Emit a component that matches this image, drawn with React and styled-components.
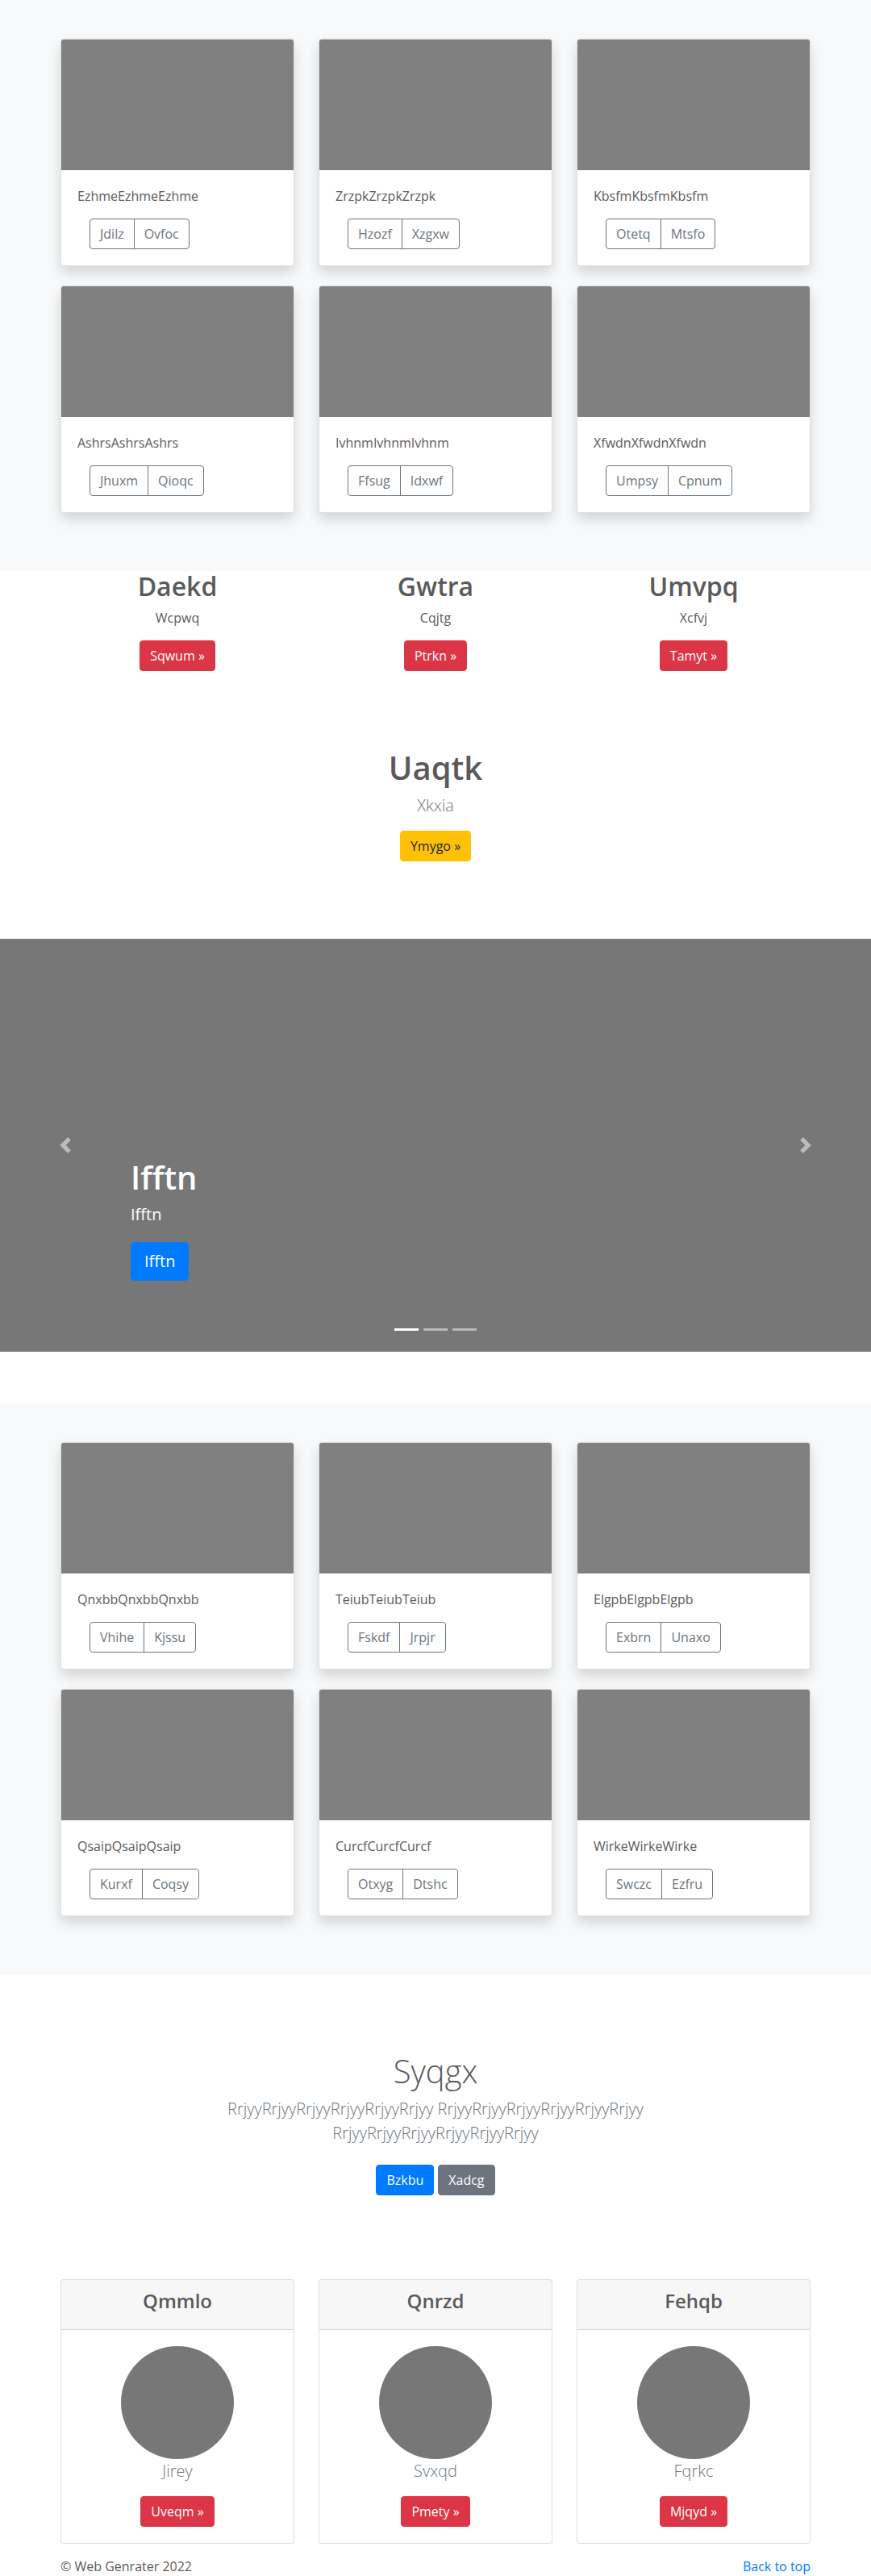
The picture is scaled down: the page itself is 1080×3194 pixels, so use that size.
import React from "react";
import styled, { createGlobalStyle, css } from "styled-components";

const GlobalStyle = createGlobalStyle`
  *, *::before, *::after { box-sizing: border-box; }
  html, body { margin: 0; padding: 0; }
  body {
    font-family: "Open Sans", "Noto Sans", "Liberation Sans", sans-serif;
    font-size: 16px;
    line-height: 1.5;
    color: #5a5a5a;
    background: #fff;
  }
`;

const Container = styled.div`
  width: 100%;
  max-width: ${(p) => p.$max || 960}px;
  margin: 0 auto;
  padding: 0 15px;
`;

/* ---------- Album ---------- */
const AlbumSection = styled.section`
  background: #f8f9fa;
  padding: 48px 0;
`;

const CardGrid = styled.div`
  display: grid;
  grid-template-columns: repeat(3, 1fr);
  column-gap: 30px;
`;

const AlbumCard = styled.div`
  display: flex;
  flex-direction: column;
  background: #fff;
  border: 1px solid rgba(0, 0, 0, 0.125);
  border-radius: 4px;
  margin-bottom: 24px;
  box-shadow: 0 8px 16px rgba(0, 0, 0, 0.15);
  overflow: hidden;
`;

const CardImage = styled.div`
  width: 100%;
  aspect-ratio: 16 / 9;
  background: #808080;
`;

const CardBody = styled.div`
  padding: 20px;
`;

const CardText = styled.p`
  margin: 0 0 16px;
`;

const ButtonGroup = styled.div`
  display: inline-flex;
  margin-left: 15px;
`;

const OutlineButton = styled.button`
  font: inherit;
  font-size: 16px;
  line-height: 24px;
  padding: 6px 12px;
  color: #6c757d;
  background: transparent;
  border: 1px solid #6c757d;
  border-radius: 0;
  cursor: pointer;
  &:first-child { border-radius: 4px 0 0 4px; }
  &:last-child { border-radius: 0 4px 4px 0; margin-left: -1px; }
`;

/* ---------- Buttons ---------- */
const variants = {
  danger: css`background: #dc3545; border-color: #dc3545; color: #fff;`,
  warning: css`background: #ffc107; border-color: #ffc107; color: #212529;`,
  primary: css`background: #007bff; border-color: #007bff; color: #fff;`,
  secondary: css`background: #6c757d; border-color: #6c757d; color: #fff;`,
};

const Button = styled.a`
  display: inline-block;
  font-weight: 400;
  text-decoration: none;
  border: 1px solid transparent;
  cursor: pointer;
  ${(p) =>
    p.$size === "lg"
      ? css`padding: 8px 16px; font-size: 20px; line-height: 30px; border-radius: 4.8px;`
      : css`padding: 6px 12px; font-size: 16px; line-height: 24px; border-radius: 4px;`}
  ${(p) => variants[p.$variant || "primary"]}
`;

const ButtonLine = styled.p`
  margin: 0;
  display: flex;
  justify-content: ${(p) => p.$justify || "center"};
  gap: 5px;
  padding: ${(p) => (p.$spaced ? "8px 0" : "0")};
`;

/* ---------- Marketing ---------- */
const FeatureRow = styled.div`
  display: grid;
  grid-template-columns: repeat(3, 1fr);
  column-gap: 30px;
`;

const FeatureCol = styled.div`
  text-align: center;
`;

const FeatureTitle = styled.h2`
  margin: 0 0 8px;
  font-size: 32px;
  line-height: 1.2;
  font-weight: 600;
  color: #5a5a5a;
`;

const FeatureText = styled.p`
  margin: 0 12px 16px;
`;

/* ---------- Jumbotron ---------- */
const Jumbotron = styled.section`
  padding: 96px 0;
  text-align: center;
  background: #fff;
`;

const JumboTitle = styled.h1`
  margin: 0 0 8px;
  font-size: 40px;
  line-height: 1.2;
  font-weight: ${(p) => (p.$light ? 300 : 600)};
  color: #5a5a5a;
`;

const Lead = styled.p`
  margin: 0 0 16px;
  font-size: 20px;
  line-height: 30px;
  font-weight: 300;
  color: #6c757d;
`;

/* ---------- Carousel ---------- */
const Carousel = styled.div`
  position: relative;
  height: 512px;
  background: #777;
  margin-bottom: 64px;
  overflow: hidden;
`;

const CarouselControl = styled.a`
  position: absolute;
  top: 0;
  bottom: 0;
  ${(p) => (p.$side === "next" ? "right: 0;" : "left: 0;")}
  width: 15%;
  display: flex;
  align-items: center;
  justify-content: center;
  opacity: 0.5;
  z-index: 2;
`;

const CarouselCaption = styled.div`
  position: absolute;
  left: 15%;
  right: 15%;
  bottom: 48px;
  padding: 20px 0;
  color: #fff;
  text-align: left;
  z-index: 10;
`;

const CaptionTitle = styled.h1`
  margin: 0 0 8px;
  font-size: 40px;
  line-height: 1.2;
  font-weight: 600;
`;

const CaptionText = styled.p`
  margin: 0 0 20px;
  font-size: 20px;
  line-height: 1.4;
`;

const Indicators = styled.ol`
  position: absolute;
  left: 15%;
  right: 15%;
  bottom: 0;
  margin: 0 0 16px;
  padding: 0;
  list-style: none;
  display: flex;
  justify-content: center;
  z-index: 15;
`;

const Indicator = styled.li`
  width: 30px;
  height: 23px;
  margin: 0 3px;
  border-top: 10px solid transparent;
  border-bottom: 10px solid transparent;
  background: #fff;
  background-clip: padding-box;
  opacity: ${(p) => (p.$active ? 1 : 0.5)};
`;

/* ---------- Pricing ---------- */
const PricingDeck = styled.div`
  display: grid;
  grid-template-columns: repeat(3, 1fr);
  column-gap: 30px;
  margin-bottom: 16px;
`;

const PricingCard = styled.div`
  border: 1px solid rgba(0, 0, 0, 0.125);
  border-radius: 4px;
  text-align: center;
  background: #fff;
`;

const PricingHeader = styled.div`
  padding: 12px 20px;
  background: rgba(0, 0, 0, 0.03);
  border-bottom: 1px solid rgba(0, 0, 0, 0.125);
`;

const PricingTitle = styled.h4`
  margin: 0 0 8px;
  font-size: 24px;
  line-height: 1.2;
  font-weight: 600;
  color: #5a5a5a;
`;

const PricingBody = styled.div`
  padding: 20px;
  display: flex;
  flex-direction: column;
  align-items: center;
`;

const Avatar = styled.div`
  width: 140px;
  height: 140px;
  border-radius: 50%;
  background: #777;
`;

const PersonName = styled.p`
  margin: 0 0 16px;
  font-size: 20px;
  line-height: 30px;
  font-weight: 300;
  color: #6c757d;
`;

/* ---------- Footer ---------- */
const Footer = styled.footer`
  display: flex;
  justify-content: space-between;
  align-items: center;
  line-height: 24px;
`;

const FooterText = styled.p`
  margin: 0;
  color: #5a5a5a;
`;

const FooterLink = styled.a`
  color: #007bff;
  text-decoration: none;
`;

const ChevronIcon = ({ dir }) => (
  <svg width="20" height="20" viewBox="0 0 8 8" fill="#fff" aria-hidden="true">
    {dir === "prev" ? (
      <path d="M5.25 0l-4 4 4 4 1.5-1.5L4.25 4l2.5-2.5L5.25 0z" />
    ) : (
      <path d="M2.75 0l-1.5 1.5L3.75 4l-2.5 2.5L2.75 8l4-4-4-4z" />
    )}
  </svg>
);

const album1 = [
  ["EzhmeEzhmeEzhme", "Jdilz", "Ovfoc"],
  ["ZrzpkZrzpkZrzpk", "Hzozf", "Xzgxw"],
  ["KbsfmKbsfmKbsfm", "Otetq", "Mtsfo"],
  ["AshrsAshrsAshrs", "Jhuxm", "Qioqc"],
  ["IvhnmIvhnmIvhnm", "Ffsug", "Idxwf"],
  ["XfwdnXfwdnXfwdn", "Umpsy", "Cpnum"],
];

const album2 = [
  ["QnxbbQnxbbQnxbb", "Vhihe", "Kjssu"],
  ["TeiubTeiubTeiub", "Fskdf", "Jrpjr"],
  ["ElgpbElgpbElgpb", "Exbrn", "Unaxo"],
  ["QsaipQsaipQsaip", "Kurxf", "Coqsy"],
  ["CurcfCurcfCurcf", "Otxyg", "Dtshc"],
  ["WirkeWirkeWirke", "Swczc", "Ezfru"],
];

const features = [
  ["Daekd", "Wcpwq", "Sqwum"],
  ["Gwtra", "Cqjtg", "Ptrkn"],
  ["Umvpq", "Xcfvj", "Tamyt"],
];

const people = [
  ["Qmmlo", "Jirey", "Uveqm"],
  ["Qnrzd", "Svxqd", "Pmety"],
  ["Fehqb", "Fqrkc", "Mjqyd"],
];

const Album = ({ items }) => (
  <AlbumSection>
    <Container>
      <CardGrid>
        {items.map(([text, a, b]) => (
          <AlbumCard key={text}>
            <CardImage />
            <CardBody>
              <CardText>{text}</CardText>
              <ButtonGroup>
                <OutlineButton type="button">{a}</OutlineButton>
                <OutlineButton type="button">{b}</OutlineButton>
              </ButtonGroup>
            </CardBody>
          </AlbumCard>
        ))}
      </CardGrid>
    </Container>
  </AlbumSection>
);

const rr = "RrjyyRrjyyRrjyyRrjyyRrjyyRrjyy";

export default function App() {
  return (
    <>
      <GlobalStyle />
      <Album items={album1} />

      <Container>
        <FeatureRow>
          {features.map(([t, s, b]) => (
            <FeatureCol key={t}>
              <FeatureTitle>{t}</FeatureTitle>
              <FeatureText>{s}</FeatureText>
              <ButtonLine>
                <Button href="#" $variant="danger">{b} &raquo;</Button>
              </ButtonLine>
            </FeatureCol>
          ))}
        </FeatureRow>
      </Container>

      <Jumbotron>
        <Container>
          <JumboTitle>Uaqtk</JumboTitle>
          <Lead>Xkxia</Lead>
          <ButtonLine>
            <Button href="#" $variant="warning">Ymygo &raquo;</Button>
          </ButtonLine>
        </Container>
      </Jumbotron>

      <Carousel>
        <CarouselControl href="#" $side="prev"><ChevronIcon dir="prev" /></CarouselControl>
        <CarouselCaption>
          <CaptionTitle>Ifftn</CaptionTitle>
          <CaptionText>Ifftn</CaptionText>
          <CaptionText as="div">
            <Button href="#" $size="lg" $variant="primary">Ifftn</Button>
          </CaptionText>
        </CarouselCaption>
        <CarouselControl href="#" $side="next"><ChevronIcon dir="next" /></CarouselControl>
        <Indicators>
          <Indicator $active />
          <Indicator />
          <Indicator />
        </Indicators>
      </Carousel>

      <Album items={album2} />

      <Jumbotron>
        <Container $max={640}>
          <JumboTitle $light>Syqgx</JumboTitle>
          <Lead>{rr} {rr} {rr}</Lead>
          <ButtonLine $spaced>
            <Button href="#" $variant="primary">Bzkbu</Button>
            <Button href="#" $variant="secondary">Xadcg</Button>
          </ButtonLine>
        </Container>
      </Jumbotron>

      <Container>
        <PricingDeck>
          {people.map(([h, n, b]) => (
            <PricingCard key={h}>
              <PricingHeader>
                <PricingTitle>{h}</PricingTitle>
              </PricingHeader>
              <PricingBody>
                <Avatar />
                <PersonName>{n}</PersonName>
                <Button href="#" $variant="danger">{b} &raquo;</Button>
              </PricingBody>
            </PricingCard>
          ))}
        </PricingDeck>
        <Footer>
          <FooterText>&copy; Web Genrater 2022</FooterText>
          <FooterLink href="#">Back to top</FooterLink>
        </Footer>
      </Container>
    </>
  );
}
